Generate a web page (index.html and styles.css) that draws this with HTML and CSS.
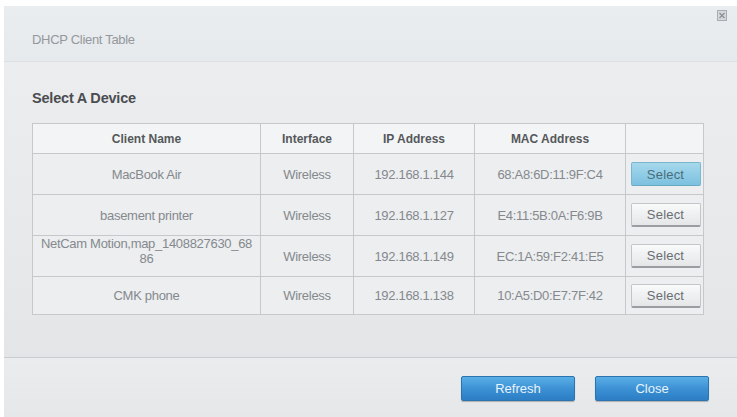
FILE: index.html
```
<!DOCTYPE html>
<html>
<head>
<meta charset="utf-8">
<link rel="stylesheet" href="styles.css">
</head>
<body>
<div class="dialog">
  <div class="header">
    <span class="title">DHCP Client Table</span>
    <span class="close-x">
      <svg width="10" height="11" viewBox="0 0 10 11"><rect x="0.5" y="0.5" width="9" height="10" fill="#d4d8dc" stroke="#a8adb2"/><path d="M2.5 3 L7.5 8 M7.5 3 L2.5 8" stroke="#8a9096" stroke-width="1.2"/></svg>
    </span>
  </div>
  <div class="body">
    <h2 class="section">Select A Device</h2>
    <table class="clients">
      <colgroup>
        <col class="c-name"><col class="c-if"><col class="c-ip"><col class="c-mac"><col class="c-act">
      </colgroup>
      <thead>
        <tr><th>Client Name</th><th>Interface</th><th>IP Address</th><th>MAC Address</th><th></th></tr>
      </thead>
      <tbody>
        <tr><td>MacBook Air</td><td>Wireless</td><td>192.168.1.144</td><td>68:A8:6D:11:9F:C4</td><td><button class="sel hot">Select</button></td></tr>
        <tr><td>basement printer</td><td>Wireless</td><td>192.168.1.127</td><td>E4:11:5B:0A:F6:9B</td><td><button class="sel">Select</button></td></tr>
        <tr><td><div class="wrap"><span class="ln">NetCam Motion,map_1408827630_68</span><span class="ln">86</span></div></td><td>Wireless</td><td>192.168.1.149</td><td>EC:1A:59:F2:41:E5</td><td><button class="sel">Select</button></td></tr>
        <tr class="last"><td>CMK phone</td><td>Wireless</td><td>192.168.1.138</td><td>10:A5:D0:E7:7F:42</td><td><button class="sel">Select</button></td></tr>
      </tbody>
    </table>
  </div>
  <div class="footer">
    <button class="blue">Refresh</button>
    <button class="blue">Close</button>
  </div>
</div>
</body>
</html>
```
FILE: styles.css
```
html, body {
  margin: 0;
  padding: 0;
  background: #ffffff;
}
body {
  font-family: "Liberation Sans", Arial, sans-serif;
  width: 737px;
  height: 417px;
  overflow: hidden;
}
.dialog {
  margin: 6px 0 0 4px;
  width: 733px;
  height: 411px;
  display: flex;
  flex-direction: column;
  background: #e8eaec;
}
.header {
  height: 56px;
  box-sizing: border-box;
  border-bottom: 1px solid #dde1e4;
  background: linear-gradient(#e9edf0, #e6eaed);
  display: flex;
  align-items: flex-start;
  justify-content: space-between;
  padding: 26px 10px 0 28px;
}
.title {
  font-size: 13px;
  line-height: 15px;
  color: #94989c;
  letter-spacing: -0.3px;
}
.close-x {
  margin-top: -22px;
  line-height: 0;
}
.body {
  height: 296px;
  box-sizing: border-box;
  padding: 27px 0 0 28px;
  background: linear-gradient(#ebedef, #e6e8ea 70%, #e3e5e7);
  border-bottom: 1px solid #c9ccd0;
}
.section {
  margin: 0 0 16px 0;
  font-size: 14.5px;
  font-weight: bold;
  color: #4a4d50;
  height: 18px;
  line-height: 18px;
  letter-spacing: -0.2px;
}
.clients {
  border-collapse: collapse;
  width: 671px;
  table-layout: fixed;
  background: #eceef0;
}
.c-name { width: 228px; }
.c-if { width: 93px; }
.c-ip { width: 121px; }
.c-mac { width: 151px; }
.c-act { width: 78px; }
.clients th, .clients td {
  border: 1px solid #c6c9cc;
  text-align: center;
  padding: 0;
}
.clients th {
  height: 29px;
  background: #f3f4f5;
  font-size: 12px;
  font-weight: bold;
  color: #55585b;
}
.clients td {
  height: 40px;
  font-size: 13px;
  color: #85898d;
  letter-spacing: -0.3px;
}
.clients tr.last td {
  height: 37px;
}
.wrap {
  display: flex;
  flex-direction: column;
  align-items: center;
  height: 40px;
  box-sizing: border-box;
  padding-top: 0;
  overflow: hidden;
}
.ln {
  display: block;
  line-height: 15px;
  height: 15px;
}
.sel {
  width: 70px;
  height: 24px;
  font-family: "Liberation Sans", Arial, sans-serif;
  font-size: 13px;
  letter-spacing: 0.2px;
  color: #6a6e72;
  border: 1px solid #c3c6c9;
  border-bottom: 2px solid #9a9ea2;
  border-radius: 2px;
  background: linear-gradient(#f9fafa, #e4e6e8);
  padding: 0;
  margin-left: 2px;
}
.sel.hot {
  background: linear-gradient(#a6d8ec, #7cc1df);
  border-color: #7bb6cf;
  border-bottom: 1px solid #6aa9c4;
  color: #4a6d7d;
}
.footer {
  flex: 1;
  display: flex;
  justify-content: flex-end;
  align-items: flex-start;
  gap: 20px;
  padding: 18px 28px 0 0;
  background: linear-gradient(#eaecee, #e5e7e9);
}
.blue {
  width: 114px;
  height: 25px;
  font-family: "Liberation Sans", Arial, sans-serif;
  font-size: 13px;
  color: #e8f3fb;
  border: 1px solid #2c74b0;
  border-radius: 2px;
  background: linear-gradient(#5aaee6, #3a8fd3 55%, #2d7ec4);
  box-shadow: 0 1px 1px rgba(0,0,0,0.25);
  padding: 0;
}
```
